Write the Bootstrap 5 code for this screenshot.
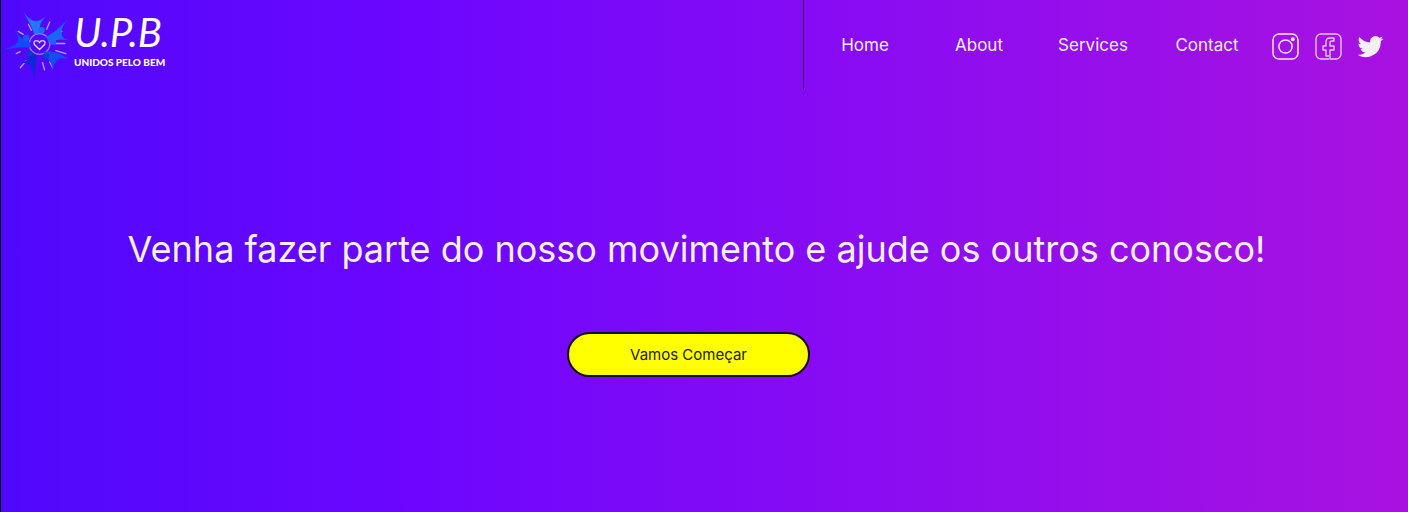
<!DOCTYPE html>
<html lang="pt-BR">
<head>
<meta charset="utf-8">
<meta name="viewport" content="width=device-width, initial-scale=1">
<title>U.P.B - Unidos pelo Bem</title>
<link href="https://cdn.jsdelivr.net/npm/bootstrap@5.3.0/dist/css/bootstrap.min.css" rel="stylesheet">
<style>
body{font-family:Inter,"Liberation Sans",sans-serif;color:#f2f0f5;background:linear-gradient(90deg,#4f08fc 0%,#6d06fe 30%,#8a0cf2 62%,#a812e0 100%);border-left:1px solid #08081c}
.site-header{min-height:90px}
.brand-words{color:#fff;font-family:Lato,"Liberation Sans",sans-serif}
.brand-initials{font-size:40px;line-height:48px;font-style:italic;font-weight:400}
.brand-motto{font-size:10px;line-height:12px;font-weight:900}
.menu-side{width:43%;border-left:1px solid #2c0a66}
.menu-side .nav-link{color:#f2f0f5;font-size:17px;line-height:22px}
.social-links{width:144px;gap:16px;padding-top:2px}
.hero-title{font-size:36px;line-height:48px;font-weight:400;margin-top:135px;margin-bottom:59px}
.hero-block{padding-right:32px}
.btn-start{width:243px;height:45px;font-size:15px;line-height:24px;background:#ff0;border:2px solid #111;color:#222;border-radius:24px}
.btn-start:hover{background:#eee600;color:#111}
</style>
</head>
<body class="min-vh-100">
<header class="site-header d-flex">
<a href="#" class="d-flex align-items-start text-decoration-none flex-grow-1 ps-1 pt-2" aria-label="U.P.B - Unidos pelo Bem">
<svg width="69" height="75" viewBox="7 8 68 74" aria-hidden="true" overflow="visible">
<g stroke="#b99bff" stroke-width="1.3" stroke-linecap="round" fill="none">
<circle cx="41" cy="43.500" r="10.200" stroke="#9978ff"/>
<path d="M41 49l-5-5c-2-4 3-5 5-2 2-3 7-2 5 2z" stroke="#e0d3ff"/>
<path d="M30 24l3 6M51 22l-3 7M25 34l-5-3M22 51l-4 2M28 60l-6 7M34 59l-2 4M44 62l2 7M51 61l3 6M57 50l10 3M57 43h9M57 34l6-3"/>
</g>
<path fill="#2475ff" d="M25 12c4 5 7 8 12 9 4 0 6-2 10-4-5 4-6 9-6 15l-5 3c-2-8-6-14-11-23z"/>
<circle cx="43" cy="30" r="3.200" fill="#176dff"/>
<path fill="#1867f5" d="M69 19c-5 6-7 10-6 16 1 3 4 4 7 5-8-2-14 0-19 2l-4-6c7-2 14-9 22-17z"/>
<circle cx="54.500" cy="41.500" r="3" fill="#1867ee"/>
<path fill="#1549f5" d="M16 29c4 6 8 11 16 13v5c-10-1-17 0-26 2 8-3 13-5 14-9 0-4-2-7-4-11z"/>
<circle cx="28" cy="37.500" r="3.200" fill="#1559f5"/>
<path fill="#0b28d9" d="M20 62c6 0 11-2 14-10l5 3c-3 7-1 12-3 23-1-8-2-13-6-15-3-1-7-1-10-1z"/>
<circle cx="31" cy="53" r="3" fill="#1137d3"/>
<path fill="#164ded" d="M45 51c7 0 14 0 19 4l7 4c-7-2-11-2-13 1-2 2-3 5-4 9-1-7-3-11-9-13z"/>
<circle cx="47.500" cy="56" r="3" fill="#0f3ad9"/>
</svg>
<span class="brand-words d-flex flex-column">
<span class="brand-initials">U.P.B</span>
<span class="brand-motto">UNIDOS PELO BEM</span>
</span>
</a>
<nav class="menu-side d-flex align-items-center" aria-label="Principal">
<ul class="nav nav-fill flex-nowrap flex-grow-1 ps-1">
<li class="nav-item col-3"><a class="nav-link px-0" href="#">Home</a></li>
<li class="nav-item col-3"><a class="nav-link px-0" href="#">About</a></li>
<li class="nav-item col-3"><a class="nav-link px-0" href="#">Services</a></li>
<li class="nav-item col-3"><a class="nav-link px-0" href="#">Contact</a></li>
</ul>
<div class="social-links d-flex align-items-center ps-2">
<a href="#" class="d-flex" aria-label="Instagram"><svg width="27" height="27" viewBox="0 0 27 27" fill="none" stroke="#f2e7fa" stroke-width="1.500"><rect x="1" y="1" width="25" height="25" rx="6"/><circle cx="13.500" cy="13.500" r="6.600"/><circle cx="20.800" cy="6.300" r="2" fill="#f2e7fa" stroke="none"/></svg></a>
<a href="#" class="d-flex" aria-label="Facebook"><svg width="27" height="27" viewBox="0 0 27 27" fill="none" stroke="#e6c5f9" stroke-width="1.400" stroke-linejoin="round"><path d="M14 26H6a5 5 0 0 1-5-5V6a5 5 0 0 1 5-5h15a5 5 0 0 1 5 5v15a5 5 0 0 1-5 5h-6v-9h4v-4h-4v-3q0-2 2-2h2V5h-4q-4 0-4 4v4H8v4h3v6h3"/></svg></a>
<a href="#" class="d-flex" aria-label="Twitter"><svg width="27" height="27" viewBox="1 0 24 24" fill="#f2f0f5"><path d="M23.600 4.900a9 9 0 0 1-2.700.8 4.700 4.700 0 0 0 2-2.600 9 9 0 0 1-3 1.100 4.700 4.700 0 0 0-8 4.300A13.400 13.400 0 0 1 2.200 3.600a4.700 4.700 0 0 0 1.500 6.300 5 5 0 0 1-2.200-.6 4.700 4.700 0 0 0 3.800 4.700 5 5 0 0 1-2.100.1 4.700 4.700 0 0 0 4.400 3.300A9.500 9.500 0 0 1 .7 19.300a13.300 13.300 0 0 0 20.500-11.900 10 10 0 0 0 2.400-2.500z"/></svg></a>
</div>
</nav>
</header>
<main class="hero-block d-flex flex-column align-items-center text-center">
<h1 class="hero-title ps-3">Venha fazer parte do nosso movimento e ajude os outros conosco!</h1>
<button type="button" class="btn btn-start">Vamos Começar</button>
</main>
<script src="https://cdn.jsdelivr.net/npm/bootstrap@5.3.0/dist/js/bootstrap.bundle.min.js"></script>
</body>
</html>
